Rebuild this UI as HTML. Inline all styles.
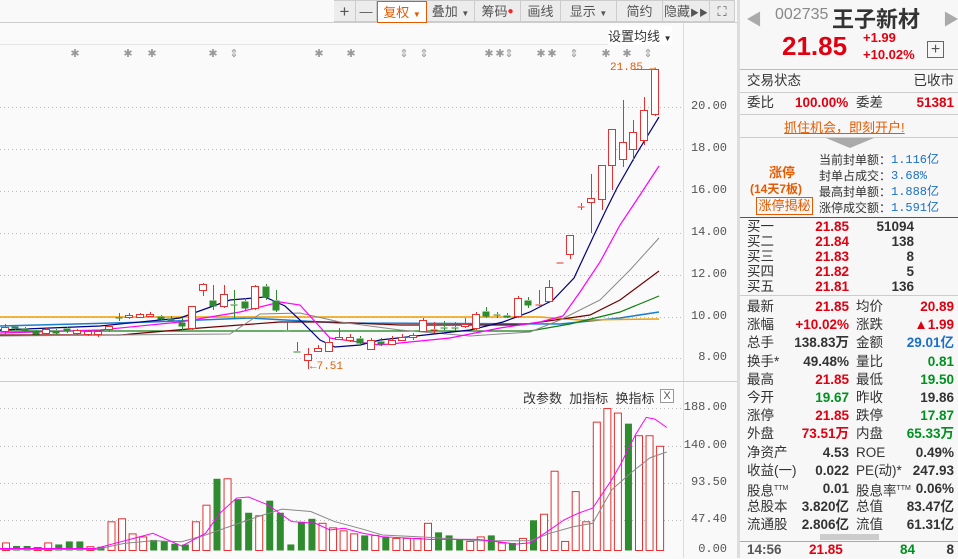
<!DOCTYPE html>
<html><head><meta charset="utf-8">
<style>
*{margin:0;padding:0;box-sizing:border-box}
body{width:958px;height:558px;overflow:hidden;background:#f9f9f9;font-family:"Liberation Sans","Noto Sans CJK SC",sans-serif;position:relative}
.a{position:absolute;white-space:nowrap}
#tb{position:absolute;left:334px;top:0;height:22px;display:flex;border-top:1px solid #ccc;border-bottom:1px solid #ccc;background:#ececec}
#tb div{height:21px;border-right:1px solid #ccc;font-size:13px;color:#555;text-align:center;line-height:21px}
#rp{position:absolute;left:737px;top:0;width:221px;height:558px;background:#f7f7f7;border-left:3px solid #ddd}
.r{position:absolute;left:0;width:218px;font-size:13.5px;height:18px;line-height:18px}
.l1{position:absolute;left:7px;color:#333}
.v1{position:absolute;right:109px;font-weight:bold}
.l2{position:absolute;left:116px;color:#333}
.v2{position:absolute;right:4px;font-weight:bold}
.red{color:#e00010}.grn{color:#009020}.blk{color:#333}.blu{color:#1a6fc9}
.sep{position:absolute;left:0;width:218px;height:1px;background:#ccc}
</style></head><body>
<svg id="ch" width="737" height="558" style="position:absolute;left:0;top:0"></svg>
<div id="tb">
<div style="width:22px;font-size:17px">+</div>
<div style="width:21px">—</div>
<div style="width:50px;color:#e55a00;background:#fff;border:1px solid #e55a00;height:22px">复权 <span style="font-size:8px">▼</span></div>
<div style="width:48px">叠加 <span style="font-size:8px">▼</span></div>
<div style="width:46px">筹码<span style="color:#f22;font-size:10px;vertical-align:top">●</span></div>
<div style="width:40px">画线</div>
<div style="width:56px">显示 <span style="font-size:8px">▼</span></div>
<div style="width:46px">简约</div>
<div style="width:47px">隐藏<span style="font-size:9px">▶▶</span></div>
<div style="width:25px">⛶</div>
</div>
<div class="a" style="left:608px;top:26px;font-size:13px;color:#333;background:#fff">设置均线 <span style="font-size:8px">▼</span></div>
<div class="a" style="left:610px;top:62px;font-size:11px;color:#e55a00;font-family:'Liberation Mono',monospace">21.85 →</div>
<div class="a" style="left:310px;top:361px;font-size:11px;color:#e55a00;font-family:'Liberation Mono',monospace">←7.51</div>
<div class="a" style="left:523px;top:388px;font-size:13px;color:#333">改参数&nbsp; 加指标&nbsp; 换指标</div>
<div class="a" style="left:660px;top:389px;width:14px;height:14px;border:1px solid #999;font-size:11px;line-height:12px;text-align:center;color:#555;background:#fff">X</div>
<div id="ax"></div>

<div id="rp">
<div class="a" style="left:6px;top:6px;color:#aaa;font-size:16px">◀</div>
<div class="a" style="left:35px;top:6px;color:#888;font-size:16px">002735</div>
<div class="a" style="left:92px;top:2px;color:#333;font-size:22px;font-weight:bold">王子新材</div>
<div class="a" style="left:203px;top:6px;color:#aaa;font-size:16px">▶</div>
<div class="a red" style="left:42px;top:31px;font-size:26px;font-weight:bold">21.85</div>
<div class="a red" style="left:123px;top:30px;font-size:13px;font-weight:bold">+1.99</div>
<div class="a red" style="left:123px;top:47px;font-size:13px;font-weight:bold">+10.02%</div>
<div class="a" style="left:187px;top:41px;width:17px;height:17px;border:1px solid #666;text-align:center;line-height:15px;font-size:16px;color:#555">+</div>
<div class="sep" style="top:69px;background:#bbb"></div>
<div class="r" style="top:72px"><span class="l1">交易状态</span><span class="v2 blk" style="font-weight:normal">已收市</span></div>
<div class="sep" style="top:92px"></div>
<div class="r" style="top:94px"><span class="l1">委比</span><span class="red" style="position:absolute;left:55px;font-weight:bold">100.00%</span><span style="position:absolute;left:116px;color:#333">委差</span><span class="v2 red">51381</span></div>
<div class="sep" style="top:114px"></div>
<div class="a" style="left:44px;top:117px;font-size:13px;color:#e55a00;text-decoration:underline">抓住机会，即刻开户!</div>
<div class="sep" style="top:137px"></div>
<div class="a" style="left:86px;top:138px;width:0;height:0;border-left:24px solid transparent;border-right:24px solid transparent;border-top:10px solid #aaa"></div>
<div class="a" style="left:29px;top:162px;font-size:13px;color:#e55a00;font-weight:bold">涨停</div>
<div class="a" style="left:10px;top:180px;font-size:12px;color:#e55a00;font-weight:bold">(14天7板)</div>
<div class="a" style="left:16px;top:197px;width:57px;height:18px;border:1px solid #e55a00;font-size:13px;color:#e55a00;line-height:16px;text-align:center">涨停揭秘</div>
<div class="a" style="left:79px;top:152px;font-size:12px;color:#333;line-height:16px">当前封单额：<br>封单占成交：<br>最高封单额：<br>涨停成交额：</div>
<div class="a blu" style="left:151px;top:152px;font-size:12px;line-height:16px;font-family:'Liberation Mono',monospace">1.116亿<br>3.68%<br>1.888亿<br>1.591亿</div>
<div class="sep" style="top:217px;background:#555"></div>
<div id="buy"></div>
<div class="sep" style="top:295px"></div>
<div id="st"></div>
<div class="a" style="left:80px;top:534px;width:59px;height:6px;background:#ccc"></div>
<div class="sep" style="top:541px;background:#aaa"></div>
<div class="r" style="top:541px"><span class="l1" style="color:#555;font-weight:bold">14:56</span><span class="red" style="position:absolute;left:69px;font-weight:bold">21.85</span><span class="grn" style="position:absolute;left:160px;font-weight:bold">84</span><span class="v2 blk">8</span></div>
</div>

<script>
var s='';
function L(x1,y1,x2,y2,c,d){s+='<line x1="'+x1+'" y1="'+y1+'" x2="'+x2+'" y2="'+y2+'" stroke="'+c+'"'+(d?' stroke-dasharray="'+d+'"':'')+'/>';}
function R(x,y,w,h,c,f){s+='<rect x="'+x+'" y="'+y+'" width="'+w+'" height="'+h+'" '+(f?'fill="'+c+'"':'fill="#fff" stroke="'+c+'"')+'/>';}
function P(pts,c,w){s+='<polyline fill="none" stroke="'+c+'" stroke-width="'+(w||1)+'" points="'+pts.map(function(p){return p.join(',')}).join(' ')+'"/>';}
s+='<rect x="0" y="23" width="683" height="535" fill="#fafafa"/>';
L(0,22.5,737,22.5,'#ccc');L(0,44.5,665,44.5,'#e6e6e6');
L(683.5,23,683.5,558,'#ddd');L(0,381.5,737,381.5,'#ccc');
[107,149,191,233,275,317,358].forEach(function(y){L(0,y+.5,683,y+.5,'#bbb','1,3')});
[408,446,483,520].forEach(function(y){L(0,y+.5,683,y+.5,'#bbb','1,3')});
var ax='';
[['20.00',107],['18.00',149],['16.00',191],['14.00',233],['12.00',275],['10.00',317],['8.00',358],['188.00',408],['140.00',446],['93.50',483],['47.40',520],['0.00',550]].forEach(function(a){
ax+='<div class="a" style="right:'+(958-727)+'px;top:'+(a[1]-8)+'px;font-size:12px;color:#555;font-family:\'Liberation Mono\',monospace">'+a[0]+'</div>';});
document.getElementById('ax').innerHTML=ax;
[[75,0],[128,0],[152,0],[213,0],[234,1],[319,0],[351,0],[404,1],[424,1],[489,0],[500,0],[509,1],[541,0],[552,0],[574,1],[606,0],[627,0],[648,1]].forEach(function(t){
s+='<text x="'+t[0]+'" y="57" font-size="11" fill="#999" text-anchor="middle" font-family="Liberation Sans">'+(t[1]?'⇕':'✱')+'</text>';});
P([[0,326],[150,322],[250,318],[340,323],[560,324],[620,318],[659,312]],'#1a7fd0',1.5);
P([[0,317],[540,317],[580,320],[659,319]],'#f0a000',1.5);
P([[0,331],[530,331],[570,324],[620,312],[659,296]],'#108010',1.2);
P([[0,335],[120,335],[200,328],[280,322],[330,322],[400,325],[520,325],[590,315],[620,300],[659,271]],'#700000',1.2);
P([[0,336],[230,334],[260,314],[300,313],[340,322],[400,330],[470,336],[530,332],[560,320],[600,300],[630,270],[659,238]],'#888',1);
P([[0,333],[100,330],[180,322],[240,312],[280,302],[300,305],[330,338],[380,345],[450,338],[500,328],[540,322],[563,316],[580,292],[600,262],[620,225],[640,195],[659,166]],'#f0f',1.2);
P([[0,330],[100,326],[180,318],[230,300],[265,297],[285,306],[300,320],[320,340],[335,347],[360,345],[380,340],[470,330],[503,322],[530,312],[553,300],[574,278],[595,233],[606,210],[617,188],[637,153],[659,117]],'#000080',1.2);
var C=[[5,327,331,324,334,1],[15,326,328,325,330,0],[25,328,331,327,333,0],[36,331,334,330,336,0],[46,329,333,328,335,1],[56,330,333,329,335,0],[67,328,331,327,333,0],[77,330,333,329,335,1],[88,331,334,330,336,1],[98,331,334,330,337,1],[109,326,329,324,332,1],[119,317,318,313,321,0],[129,315,317,313,319,1],[140,314,317,313,318,1],[150,314,316,312,317,1],[161,316,319,315,320,0],[171,318,320,316,322,0],[182,322,326,318,330,0],[192,306,328,306,330,1],[203,284,290,283,296,1],[213,300,306,285,310,0],[224,294,306,285,308,1],[234,304,305,290,318,0],[245,301,308,298,310,0],[255,286,308,285,310,1],[266,286,297,284,300,0],[276,300,310,290,312,0],[287,330,331,322,331,0],[297,351,352,342,352,0],[308,354,360,348,369,1],[318,348,351,345,351,1],[329,342,351,338,351,1],[339,337,339,328,339,1],[350,337,340,334,342,1],[360,338,343,336,346,0],[371,340,349,338,350,1],[381,341,344,338,346,0],[392,340,344,336,345,1],[402,337,340,334,341,1],[413,335,337,333,340,1],[423,320,331,318,332,1],[434,329,330,322,333,1],[444,327,328,321,330,0],[455,327,328,322,331,0],[465,324,326,318,328,1],[476,314,328,312,330,1],[486,311,316,307,318,0],[497,314,315,312,318,0],[507,315,317,313,318,0],[518,298,316,296,318,1],[528,300,305,297,308,0],[539,304,305,290,306,1],[549,287,301,280,303,1],[560,262,263,262,263,1],[570,235,254,235,259,1],[581,206,207,203,210,1],[591,198,202,174,233,1],[602,165,199,165,210,1],[612,129,165,129,190,1],[623,142,159,100,167,1],[633,132,149,120,161,1],[644,110,140,97,145,1],[655,69,114,69,116,1]];
C.forEach(function(c){var x=c[0],col=c[5]?'#e83030':'#2e8b2e';
L(x+.5,c[3],x+.5,c[1],col);L(x+.5,c[2],x+.5,c[4],col);
var h=Math.max(1,c[2]-c[1]);R(x-3.5,c[1]+.5,7,h,col,!c[5]||h<2);});
L(633,69.5,655,69.5,'#e55a00');
var V=[[10,1],[6,0],[6,0],[4,1],[10,1],[8,0],[12,0],[12,0],[5,1],[5,0],[38,1],[42,1],[22,1],[18,1],[14,0],[12,0],[9,0],[8,0],[38,1],[60,1],[95,0],[95,1],[68,0],[50,0],[46,1],[66,0],[50,0],[8,0],[38,0],[42,0],[36,1],[30,1],[26,1],[22,1],[20,0],[20,1],[18,0],[16,1],[16,1],[16,1],[36,1],[24,0],[20,0],[14,0],[12,1],[18,1],[20,0],[10,1],[10,0],[16,1],[40,0],[48,1],[105,1],[12,1],[78,1],[38,1],[170,1],[188,1],[182,1],[168,0],[152,1],[152,1],[138,1]];
V.forEach(function(v,i){var x=2+i*10.55,h=v[0]*0.755;R(x+.5,550-h+.5,7,h,v[1]?'#e83030':'#2e8b2e',!v[1]);});
function M(a){return a.map(function(p){return [p[0]*0.478,408+(p[1]-87)*0.336]})}
P(M([[0,508],[200,508],[260,490],[320,482],[380,485],[430,465],[500,430],[540,410],[590,388],[650,395],[700,425],[760,448],[800,465],[900,472],[1000,482],[1110,482],[1150,460],[1200,440],[1240,430],[1280,330],[1320,280],[1360,235],[1395,218]]),'#888',1);
P(M([[0,505],[200,505],[320,460],[380,498],[430,460],[460,400],[495,355],[520,352],[560,375],[610,425],[660,430],[690,450],[720,445],[760,460],[800,470],[900,478],[1000,478],[1080,492],[1110,488],[1150,450],[1180,420],[1210,400],[1240,385],[1280,300],[1300,250],[1330,165],[1352,115],[1370,120],[1395,145]]),'#f0f',1);
document.getElementById('ch').innerHTML=s;

var b='';[['买一','21.85','51094'],['买二','21.84','138'],['买三','21.83','8'],['买四','21.82','5'],['买五','21.81','136']].forEach(function(r,i){
b+='<div class="r" style="top:'+(219+i*15)+'px;line-height:15px;height:15px"><span class="l1">'+r[0]+'</span><span class="v1 red" style="right:109px">'+r[1]+'</span><span class="blk" style="position:absolute;right:44px;font-weight:bold">'+r[2]+'</span></div>';});
document.getElementById('buy').innerHTML=b;
var S=[['最新','21.85','red','均价','20.89','red'],['涨幅','+10.02%','red','涨跌','▲1.99','red'],['总手','138.83万','blk','金额','29.01亿','blu'],['换手*','49.48%','blk','量比','0.81','grn'],['最高','21.85','red','最低','19.50','grn'],['今开','19.67','grn','昨收','19.86','blk'],['涨停','21.85','red','跌停','17.87','grn'],['外盘','73.51万','red','内盘','65.33万','grn'],['净资产','4.53','blk','ROE','0.49%','blk'],['收益(一)','0.022','blk','PE(动)*','247.93','blk'],['股息<sup style="font-size:7px">TTM</sup>','0.01','blk','股息率<sup style="font-size:7px">TTM</sup>','0.06%','blk'],['总股本','3.820亿','blk','总值','83.47亿','blk'],['流通股','2.806亿','blk','流值','61.31亿','blk']];
var t='';S.forEach(function(r,i){t+='<div class="r" style="top:'+(298+i*18.2)+'px"><span class="l1">'+r[0]+'</span><span class="v1 '+r[2]+'">'+r[1]+'</span><span class="l2">'+r[3]+'</span><span class="v2 '+r[5]+'">'+r[4]+'</span></div>';});
document.getElementById('st').innerHTML=t;
</script>
</body></html>
